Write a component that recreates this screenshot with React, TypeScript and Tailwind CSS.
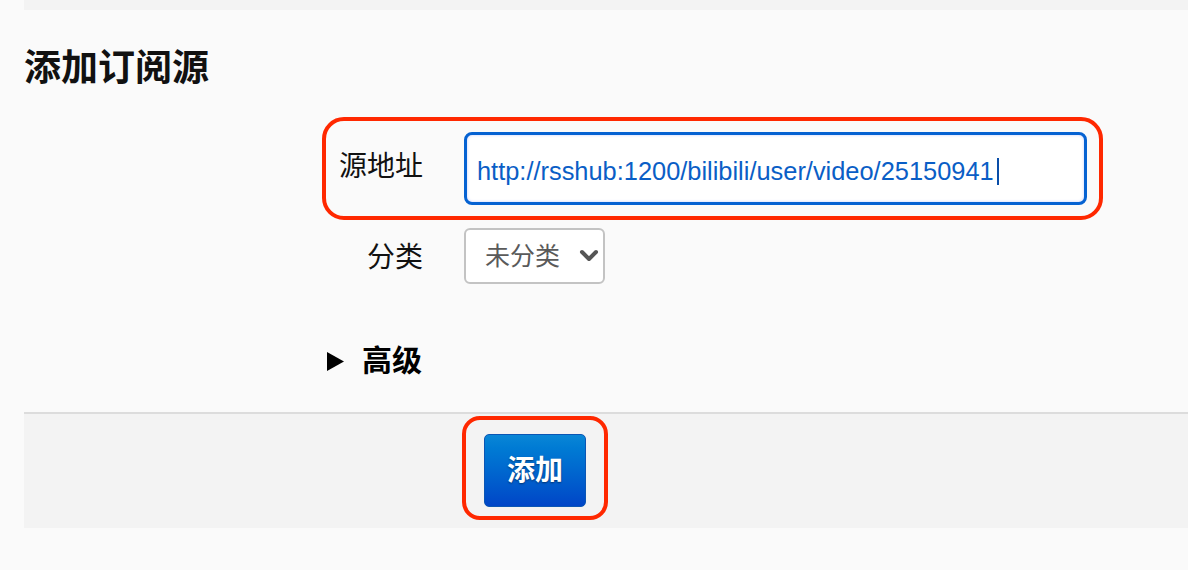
import React from "react";

const CJK = '"Liberation Sans", "Noto Sans CJK SC", sans-serif';

export default function App() {
  return (
    <div
      className="w-[1188px] h-[570px] bg-[#fafafa] overflow-hidden flex flex-col"
      style={{ fontFamily: CJK }}
    >
      <div className="ml-[24px] h-[10px] bg-[#f3f3f3] shrink-0" />
      <h1 className="ml-[24px] mt-[37px] h-[43px] text-[37px] leading-[43px] font-bold text-[#111] tracking-[0px]">
        添加订阅源
      </h1>

      {/* 源地址 row (annotated) */}
      <div className="ml-[322px] mt-[27px] w-[781px] h-[103px] border-4 border-[#ff2800] rounded-[22px] flex items-center shrink-0">
        <div className="w-[97px] text-right text-[28px] leading-none text-[#111] mb-[4px]">源地址</div>
        <div className="ml-[41px] w-[623px] h-[73px] bg-white border-[3px] border-[#0562d2] rounded-[8px] shadow-[inset_0_0_3px_rgba(80,110,255,0.35)] flex items-center pl-[10px]">
          <span className="text-[25.4px] text-[#0a5ec6] leading-none mt-[6px]">
            http://rsshub:1200/bilibili/user/video/25150941
          </span>
          <span className="ml-[3px] w-[2px] h-[27px] bg-[#0a4ea8] mt-[6px]" />
        </div>
      </div>

      {/* 分类 row */}
      <div className="ml-[326px] mt-[8px] h-[56px] flex items-center shrink-0">
        <div className="w-[97px] text-right text-[28px] leading-none text-[#111] mt-[4px]">分类</div>
        <div className="ml-[41px] w-[141px] h-[56px] bg-white border-2 border-[#c3c3c3] rounded-[6px] flex items-center pl-[19px]">
          <span className="text-[25px] leading-none text-[#5a5a5a]">未分类</span>
          <svg width="20" height="14" viewBox="0 0 20 14" className="ml-[19px]">
            <path d="M3 3 L10 10 L17 3" fill="none" stroke="#555" strokeWidth="4" strokeLinecap="round" strokeLinejoin="round" />
          </svg>
        </div>
      </div>

      {/* 高级 */}
      <div className="ml-[327px] mt-[57px] h-[40px] flex items-center shrink-0">
        <svg width="17" height="19" viewBox="0 0 17 19">
          <path d="M0 0 L17 9.5 L0 19 Z" fill="#000" />
        </svg>
        <span className="ml-[18px] text-[30px] leading-none font-bold text-[#000]">高级</span>
      </div>

      {/* footer */}
      <div className="ml-[24px] mt-[31px] border-t-2 border-[#dcdcdc] bg-[#f3f3f3] h-[116px] pl-[438px] pt-[2px] shrink-0">
        <div className="w-[146px] h-[104px] border-4 border-[#ff2800] rounded-[18px] pt-[14px] pl-[18px]">
          <button className="w-[102px] h-[73px] rounded-[5px] border border-[#0b56b4] bg-gradient-to-b from-[#0a86d6] to-[#0045c7] text-white text-[28px] font-bold [text-shadow:0_1px_2px_rgba(0,0,0,0.45)] flex items-center justify-center">
            添加
          </button>
        </div>
      </div>
    </div>
  );
}
